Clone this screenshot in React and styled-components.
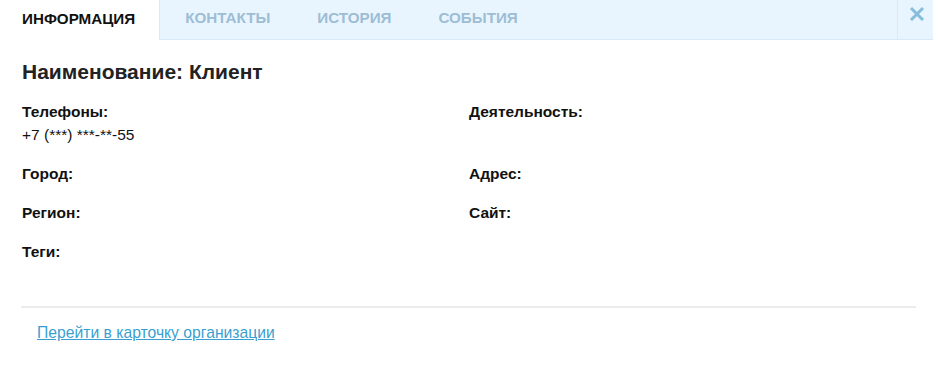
import React from "react";
import styled, { createGlobalStyle } from "styled-components";

const Global = createGlobalStyle`
  html, body { margin: 0; padding: 0; background: #fff; }
  body { font-family: "Liberation Sans", Arial, sans-serif; color: #1a1a1a; }
`;

const Panel = styled.div`
  width: 933px;
  height: 366px;
  background: #fff;
  display: flex;
  flex-direction: column;
`;

const TabBar = styled.div`
  display: flex;
  height: 40px;
  background: #e9f5fe;
  border-bottom: 1px solid #d8eaf7;
  box-sizing: border-box;
`;

const Tab = styled.div`
  display: flex;
  align-items: center;
  padding-bottom: 4px;
  padding-left: ${(p) => (p.$active ? "22px" : "25px")};
  padding-right: ${(p) => (p.$active ? "24px" : "22px")};
  height: ${(p) => (p.$active ? "40px" : "39px")};
  background: ${(p) => (p.$active ? "#fff" : "transparent")};
  border-right: ${(p) => (p.$active ? "1px solid #d8eaf7" : "none")};
  box-sizing: border-box;
  font-size: 15.2px;
  font-weight: bold;
  text-transform: uppercase;
  color: ${(p) => (p.$active ? "#111" : "#9dbdd5")};
`;

const Spacer = styled.div`
  flex: 1;
`;

const Close = styled.div`
  width: 36px;
  border-left: 1px solid #d8eaf7;
  display: flex;
  align-items: flex-start;
  justify-content: center;
  padding-top: 6px;
  padding-left: 2px;
  box-sizing: border-box;
`;

const Body = styled.div`
  padding: 19px 17px 0 22px;
`;

const Title = styled.h1`
  margin: 0 0 15px;
  font-size: 21px;
  font-weight: bold;
  color: #222;
  line-height: 26px;
`;

const Grid = styled.div`
  display: grid;
  grid-template-columns: 447px 1fr;
  row-gap: 16px;
`;

const Field = styled.div`
  font-size: 15.5px;
  line-height: 23px;
`;

const Label = styled.div`
  font-weight: bold;
  color: #111;
`;

const Value = styled.div`
  color: #111;
`;

const Divider = styled.hr`
  margin: 43px 0 0 -1px;
  border: none;
  height: 2px;
  background: #ececec;
`;

const Footer = styled.div`
  padding: 16px 0 0 15px;
`;

const Link = styled.a`
  font-size: 15.7px;
  color: #3a9fcf;
  text-decoration: underline;
  cursor: pointer;
`;

export default function App() {
  return (
    <Panel>
      <Global />
      <TabBar>
        <Tab $active>Информация</Tab>
        <Tab>Контакты</Tab>
        <Tab>История</Tab>
        <Tab>События</Tab>
        <Spacer />
        <Close>
          <svg width="16" height="16" viewBox="0 0 16 16">
            <path d="M2 2L14 14M14 2L2 14" stroke="#86bcdc" strokeWidth="3" strokeLinecap="butt" />
          </svg>
        </Close>
      </TabBar>
      <Body>
        <Title>Наименование: Клиент</Title>
        <Grid>
          <Field>
            <Label>Телефоны:</Label>
            <Value>+7 (***) ***-**-55</Value>
          </Field>
          <Field>
            <Label>Деятельность:</Label>
          </Field>
          <Field>
            <Label>Город:</Label>
          </Field>
          <Field>
            <Label>Адрес:</Label>
          </Field>
          <Field>
            <Label>Регион:</Label>
          </Field>
          <Field>
            <Label>Сайт:</Label>
          </Field>
          <Field>
            <Label>Теги:</Label>
          </Field>
        </Grid>
        <Divider />
        <Footer>
          <Link>Перейти в карточку организации</Link>
        </Footer>
      </Body>
    </Panel>
  );
}
